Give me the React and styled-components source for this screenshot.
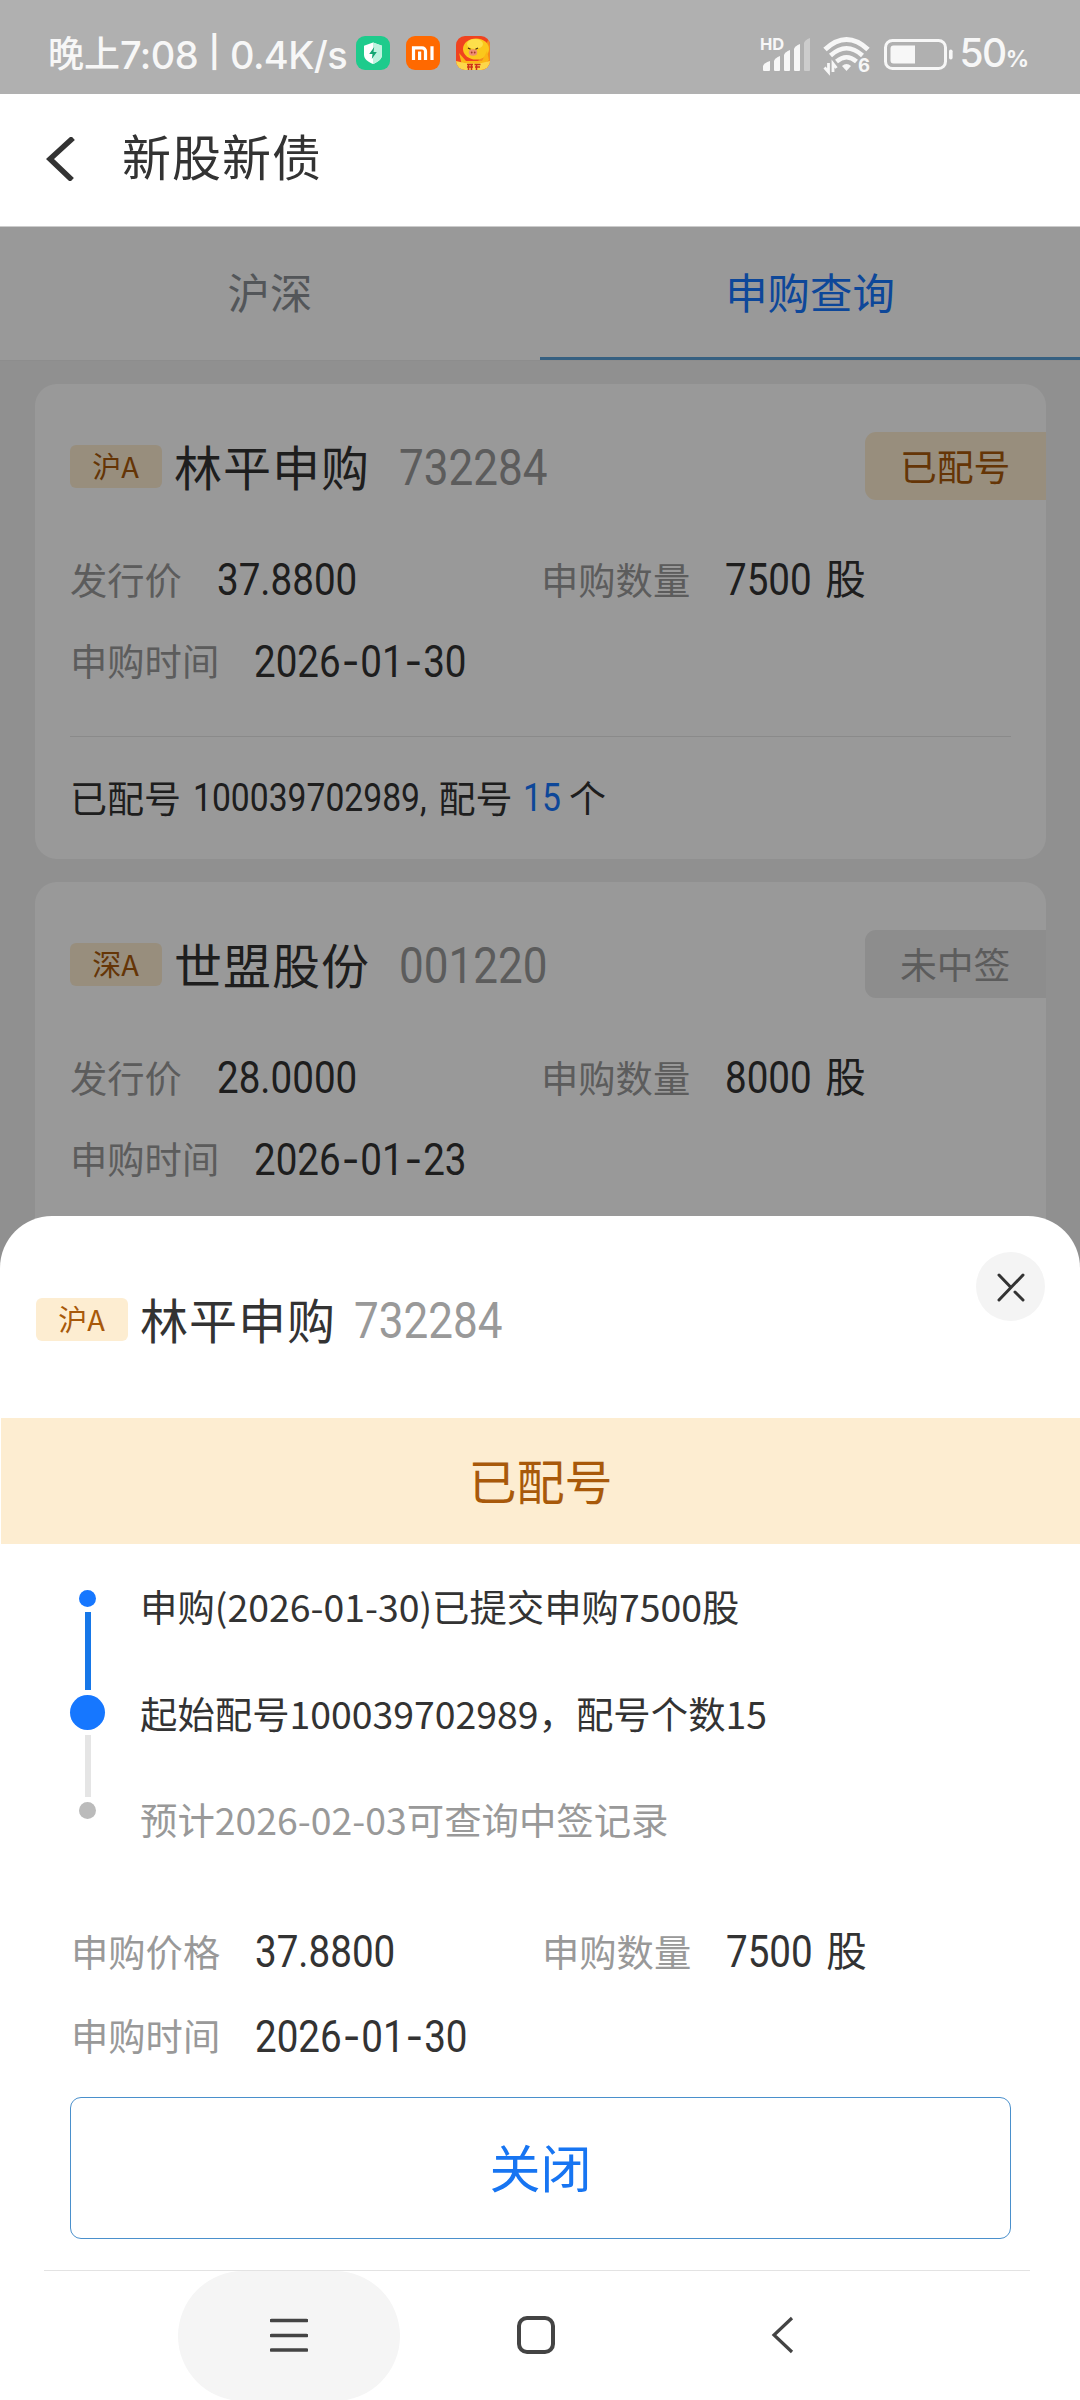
import React from 'react';
import styled, { createGlobalStyle } from 'styled-components';

const GlobalStyle = createGlobalStyle`
  * {
    box-sizing: border-box;
  }

  body {
    margin: 0;
    background: #fff;
    font-family: "Noto Sans CJK SC", "Noto Sans", sans-serif;
    color: #333;
  }
`;

const Screen = styled.div`
  display: flex;
  flex-direction: column;
  width: 1080px;
  height: 2400px;
  overflow: hidden;
  background: #fff;
`;

/* Status bar */

const StatusBar = styled.div`
  display: flex;
  align-items: center;
  height: 94px;
  padding: 15px 52px 0 48px;
  background: #b0b0b0;
  color: #f7f7f7;
  font-weight: 500;
  line-height: 40px;
  white-space: nowrap;

  svg {
    overflow: visible;
  }
`;

const Clock = styled.div`
  display: flex;
  align-items: center;
  width: 308px;
  height: 40px;
  font-family: Inter, "Noto Sans CJK SC", sans-serif;
  font-size: 38px;
  letter-spacing: -0.6px;
`;

const Hour = styled.span`
  margin-top: -1px;
  font-size: 36px;
  letter-spacing: 0;
`;

const Bar = styled.span`
  width: 32px;
  margin-top: -5px;
  font-size: 31px;
  font-weight: 600;
  text-align: center;
`;

const AppIcons = styled.div`
  display: flex;
  gap: 16px;
  height: 34px;
  margin-top: -3px;
`;

const StatusRight = styled.div`
  display: flex;
  align-items: center;
  margin-left: auto;
`;

const Percent = styled.div`
  margin: 2px 0 0 6px;
  font-family: Inter, sans-serif;
  font-size: 39px;
  letter-spacing: -1.6px;

  small {
    font-size: 23px;
    font-weight: 700;
    letter-spacing: -1px;
  }
`;

/* Header and tabs */

const Header = styled.header`
  display: flex;
  align-items: center;
  height: 133px;
  padding: 0 46px 3px;
  border-bottom: 1px solid #ccc;
`;

const PageTitle = styled.h1`
  margin: -8px 0 0 46px;
  font-size: 49px;
  font-weight: 400;
  line-height: 60px;
  letter-spacing: 1px;
`;

const Main = styled.main`
  position: relative;
  flex: 1;
  overflow: hidden;
  background: #f1f1f1;
`;

const Tabs = styled.div`
  display: flex;
  height: 134px;
  background: #fff;
  border-bottom: 1px solid #ececec;
`;

const Tab = styled.div`
  display: flex;
  flex: 1;
  align-items: center;
  justify-content: center;
  padding-bottom: ${({ $active }) => ($active ? '2px' : '5px')};
  border-bottom: ${({ $active }) => ($active ? '3px solid #5aa0d8' : 'none')};
  color: ${({ $active }) => ($active ? '#1677ff' : '#8b9095')};
  font-size: 42.4px;
  line-height: 50px;
`;

/* Cards */

const CardList = styled.div`
  display: flex;
  flex-direction: column;
  gap: 23px;
  padding: 23px 34px 0 35px;
`;

const Card = styled.section`
  height: 475px;
  padding: 48px 0 0 35px;
  border-radius: 22px;
  background: #fff;
`;

const TitleRow = styled.div`
  display: flex;
  align-items: center;
  height: 68px;
`;

const Tag = styled.span`
  width: 92px;
  height: 43px;
  margin: 0 12px 0 0;
  padding-right: 1px;
  border-radius: 6px;
  background: #fdedd1;
  color: #a8590a;
  font-size: 29px;
  line-height: 40px;
  text-align: center;
`;

const StockName = styled.span`
  font-size: 48px;
  line-height: 60px;
  letter-spacing: 1px;
  margin-top: -2px;
`;

/* Narrow figures: the box keeps its width, the glyphs are drawn tighter */
const Num = styled.span`
  display: inline-block;
  font-family: Roboto, sans-serif;
  font-size: ${({ $size }) => $size || 43.6}px;
  line-height: 1.2;
  margin-top: 4px;
  transform: scaleX(0.885);
  transform-origin: left center;
`;

const Dash = styled.span`
  padding: 0 1px;
  font-family: Inter, sans-serif;
`;

const Code = styled(Num)`
  margin: 5px 0 0 ${({ $gap }) => $gap}px;
  color: #999;
  transform: scaleX(0.872);
`;

const Badge = styled.span`
  width: 181px;
  height: 68px;
  margin-left: auto;
  padding-left: 35px;
  border-radius: 11px 0 0 11px;
  background: ${({ $muted }) => ($muted ? '#ebebeb' : '#fdedd1')};
  color: ${({ $muted }) => ($muted ? '#999' : '#a8590a')};
  font-size: 36.8px;
  line-height: 67px;
`;

const InfoGrid = styled.div`
  display: grid;
  grid-template-columns: 471px 1fr;
  grid-auto-rows: ${({ $row }) => $row}px;
  align-items: center;
  margin-top: ${({ $top }) => $top}px;
`;

const Field = styled.div`
  display: flex;
  align-items: center;
  line-height: 50px;
`;

const Label = styled.span`
  margin: -2px 35px 0 0;
  color: #999;
  font-size: 37.3px;
`;

const Unit = styled.span`
  margin: -5px 0 0 2px;
  font-size: 40.5px;
`;

const Footer = styled.div`
  display: flex;
  align-items: center;
  height: 120px;
  margin: 35px 35px 0 0;
  border-top: 1px solid #e6e6e6;
  font-size: 37px;
  line-height: 48px;
`;

const FooterNum = styled(Num)`
  margin: 4px ${({ $right }) => $right}px 0 ${({ $left }) => $left}px;
  color: ${({ $blue }) => ($blue ? '#1677ff' : 'inherit')};
  transform: scaleX(0.87);
`;

/* Bottom sheet over the dimmed page */

const Mask = styled.div`
  position: absolute;
  inset: 0;
  display: flex;
  flex-direction: column;
  justify-content: flex-end;
  background: rgba(0, 0, 0, 0.4);
`;

const Sheet = styled.div`
  display: flex;
  flex-direction: column;
  height: 1184px;
  border-radius: 52px 52px 0 0;
  background: #fff;
`;

const SheetHeader = styled.div`
  display: flex;
  align-items: flex-start;
  justify-content: space-between;
  height: 202px;
  padding: 36px 35px 0 36px;
`;

const SheetTitle = styled(TitleRow)`
  margin-top: 33px;
`;

const CloseIcon = styled.button`
  display: flex;
  align-items: center;
  justify-content: center;
  width: 69px;
  height: 69px;
  padding: 0;
  border: 0;
  border-radius: 50%;
  background: #f4f4f4;
`;

const Banner = styled.div`
  height: 126px;
  margin-left: 1px;
  background: #fdedd1;
  color: #a8590a;
  font-size: 48px;
  line-height: 122px;
  text-align: center;
`;

const Steps = styled.div`
  display: flex;
  padding: 46px 0 0 70px;
`;

const Track = styled.div`
  display: flex;
  flex-direction: column;
  align-items: center;
  width: 35px;
  margin-right: 35px;
`;

const Dot = styled.i`
  width: ${({ $size }) => $size}px;
  height: ${({ $size }) => $size}px;
  border-radius: 50%;
  background: ${({ $done }) => ($done ? '#1677ff' : '#bbb')};
`;

const Line = styled.i`
  width: 6px;
  height: ${({ $length }) => $length}px;
  margin: 5px 0;
  background: ${({ $done }) => ($done ? '#1677e8' : '#e5e5e5')};
`;

const StepList = styled.ul`
  margin: -19px 0 0;
  padding: 0;
  list-style: none;
`;

const Step = styled.li`
  height: 106.5px;
  color: ${({ $pending }) => ($pending ? '#999' : '#333')};
  font-size: 37.4px;
  line-height: 70px;
`;

const Details = styled.div`
  padding-left: 71px;
`;

const CloseButton = styled.button`
  height: 142px;
  margin: 19px 69px 0 70px;
  padding: 0 0 4px;
  border: 1.5px solid #4a90cc;
  border-radius: 11px;
  background: #fff;
  color: #1775f2;
  font-family: inherit;
  font-size: 51px;
  line-height: 60px;
`;

const NavBar = styled.nav`
  display: grid;
  grid-template-columns: 222px 272px 221px;
  align-items: center;
  justify-items: center;
  height: 130px;
  margin: auto 50px 0 44px;
  padding-left: 134px;
  border-top: 1px solid #e3e3e3;
`;

const NavItem = styled.div`
  display: flex;
  align-items: center;
  justify-content: center;
  width: 222px;
  height: 130px;
  border-radius: 65px;
  background: ${({ $pressed }) => ($pressed ? '#f5f5f5' : 'none')};
`;

const ShieldIcon = () => (
  <svg width="34" height="34" viewBox="0 0 34 34">
    <rect width="34" height="34" rx="9" fill="#1ecb8c" />
    <path d="M17 6.500l9 3.200v8.800c0 4.600-4 7.500-9 9.500-5-2-9-4.900-9-9.500V9.700z" fill="#fff" />
    <path d="M17 6.500l9 3.200v8.800c0 4.600-4 7.500-9 9.500z" fill="#bdf3df" />
    <path d="M18.200 11l-5 7h3.300l-.7 5 5-7h-3.300z" fill="#14a673" />
  </svg>
);

const MiIcon = () => (
  <svg width="34" height="34" viewBox="0 0 34 34">
    <rect width="34" height="34" rx="9" fill="#ff6900" />
    <path d="M7.500 24V11.800h8.500a3.500 3.500 0 0 1 3.500 3.500V24M13.600 15.500V24M26 10.300V24" fill="none" stroke="#fff" strokeWidth="3.200" />
  </svg>
);

const PigIcon = () => (
  <svg width="34" height="34" viewBox="0 0 34 34">
    <defs>
      <clipPath id="pig">
        <rect width="34" height="34" rx="9" />
      </clipPath>
    </defs>
    <g clipPath="url(#pig)">
      <rect width="34" height="34" fill="#f0431f" />
      <path d="M34 0v34H18z" fill="#f58a1d" />
      <ellipse cx="20" cy="13" rx="13" ry="10.500" fill="#fbc81c" />
      <ellipse cx="19" cy="8" rx="8" ry="5" fill="#fde04b" />
      <path d="M3 17l7 8h16l5-10 2 9-6 5H6z" fill="#fbb615" />
      <ellipse cx="17" cy="16.500" rx="4.200" ry="3.200" fill="#ef8d72" />
      <circle cx="15.700" cy="16.500" r="0.900" fill="#a33a26" />
      <circle cx="18.700" cy="16.500" r="0.900" fill="#a33a26" />
      <path d="M12 12l2.500 1.300M22 12l-2.500 1.300" stroke="#4a2a10" strokeWidth="1.200" />
      <path d="M0 25q17 5 34 0v9H0z" fill="#fcd64a" />
      <path d="M11 28.500h6M11 31h6M12.500 28v6M15.500 28v6M18.500 28.500h6M19 31h5M20.500 28v6" stroke="#cf3019" strokeWidth="1.500" />
    </g>
  </svg>
);

const SignalIcon = () => (
  <svg width="50" height="36" viewBox="0 0 50 36" fill="#f7f7f7">
    <text x="-1" y="13" fontFamily="Inter, sans-serif" fontSize="16.500" fontWeight="700">HD</text>
    <path d="M2 33v-4q1-3 7-5v9q0 1-1 1H3q-1 0-1-1z" />
    <path d="M13 33v-9q1-3 6-5v14q0 1-1 1h-4q-1 0-1-1z" />
    <path d="M23 33V18q1-3 6-5v20q0 1-1 1h-4q-1 0-1-1z" />
    <path d="M33 33V12q1-3 6-5v26q0 1-1 1h-4q-1 0-1-1z" />
    <path d="M43 33V6q1-3 6-5v32q0 1-1 1h-4q-1 0-1-1z" opacity="0.400" />
  </svg>
);

const WifiIcon = () => (
  <svg width="48" height="38" viewBox="0 0 48 38" fill="none" stroke="#f7f7f7">
    <path d="M2 13.500Q23.500-6.500 45 13.500" strokeWidth="5" />
    <path d="M7.500 19.500Q23.500 5 39.500 19.500" strokeWidth="4.500" />
    <path d="M13.500 25.500Q23.500 17 33.500 25.500" strokeWidth="4.500" />
    <path d="M19 30q4.500-4 9 0l-4.500 5z" fill="#f7f7f7" stroke="none" />
    <path d="M5.500 27v9l-4-4.500M10 36v-8.500l3.500 4.500" strokeWidth="2.800" />
    <text x="35" y="36" fill="#f7f7f7" stroke="none" fontFamily="Inter, sans-serif" fontSize="18.500" fontWeight="700">6</text>
  </svg>
);

const BatteryIcon = () => (
  <svg width="70" height="32" viewBox="0 0 70 32">
    <rect x="1.500" y="1.500" width="60" height="28" rx="7" fill="none" stroke="#f7f7f7" strokeWidth="3" />
    <path d="M31 6.500v18H9.500a3 3 0 0 1-3-3v-12a3 3 0 0 1 3-3z" fill="#f7f7f7" />
    <rect x="65" y="10.500" width="3.600" height="10" rx="1.800" fill="#f7f7f7" />
  </svg>
);

const StatusGap = styled.i`
  width: ${({ $w }) => $w}px;
`;

const StockTitle = ({ market, name, code, gap }) => (
  <>
    <Tag>{market}</Tag>
    <StockName>{name}</StockName>
    <Code $size={50.5} $gap={gap}>{code}</Code>
  </>
);

const DateNum = ({ value }) => (
  <Num>
    {value.split('-').map((part, i) => (
      <React.Fragment key={i}>
        {i > 0 && <Dash>-</Dash>}
        {part}
      </React.Fragment>
    ))}
  </Num>
);

const Info = ({ priceLabel, price, amount, date, row, top }) => (
  <InfoGrid $row={row} $top={top}>
    <Field>
      <Label>{priceLabel}</Label>
      <Num>{price}</Num>
    </Field>
    <Field>
      <Label>申购数量</Label>
      <Num>{amount}</Num>
      <Unit>股</Unit>
    </Field>
    <Field>
      <Label>申购时间</Label>
      <DateNum value={date} />
    </Field>
  </InfoGrid>
);

const App = () => (
  <Screen>
    <GlobalStyle />
    <StatusBar>
      <Clock>
        <Hour>晚上</Hour>
        <span>7:08</span>
        <Bar>|</Bar>
        <span>0.4K/s</span>
      </Clock>
      <AppIcons>
        <ShieldIcon />
        <MiIcon />
        <PigIcon />
      </AppIcons>
      <StatusRight>
        <SignalIcon />
        <StatusGap $w={12} />
        <WifiIcon />
        <StatusGap $w={13} />
        <BatteryIcon />
        <Percent>
          50
          <small>%</small>
        </Percent>
      </StatusRight>
    </StatusBar>

    <Header>
      <svg width="30" height="44" viewBox="0 0 30 44">
        <path d="M27 1L4 22l22 21" fill="none" stroke="#333" strokeWidth="5.500" />
      </svg>
      <PageTitle>新股新债</PageTitle>
    </Header>

    <Main>
      <Tabs>
        <Tab>沪深</Tab>
        <Tab $active>申购查询</Tab>
      </Tabs>
      <CardList>
        <Card>
          <TitleRow>
            <StockTitle market="沪A" name="林平申购" code="732284" gap={29} />
            <Badge>已配号</Badge>
          </TitleRow>
          <Info priceLabel="发行价" price="37.8800" amount="7500" date="2026-01-30" row={81} top={39} />
          <Footer>
            已配号
            <FooterNum $size={38.7} $left={12} $right={-23}>100039702989,</FooterNum>
            配号
            <FooterNum $size={38.7} $left={10} $right={3} $blue>15</FooterNum>
            个
          </Footer>
        </Card>
        <Card>
          <TitleRow>
            <StockTitle market="深A" name="世盟股份" code="001220" gap={29} />
            <Badge $muted>未中签</Badge>
          </TitleRow>
          <Info priceLabel="发行价" price="28.0000" amount="8000" date="2026-01-23" row={81} top={39} />
        </Card>
      </CardList>

      <Mask>
        <Sheet>
          <SheetHeader>
            <SheetTitle>
              <StockTitle market="沪A" name="林平申购" code="732284" gap={18} />
            </SheetTitle>
            <CloseIcon>
              <svg width="30" height="30" viewBox="0 0 30 30">
                <path d="M3 28L27 3M3 3l12 12.500M19 20l8 8" fill="none" stroke="#333" strokeWidth="3" strokeLinecap="round" />
              </svg>
            </CloseIcon>
          </SheetHeader>
          <Banner>已配号</Banner>
          <Steps>
            <Track>
              <Dot $size={17} $done />
              <Line $length={78} $done />
              <Dot $size={35} $done />
              <Line $length={62} />
              <Dot $size={17} />
            </Track>
            <StepList>
              <Step>申购(2026-01-30)已提交申购7500股</Step>
              <Step>起始配号100039702989，配号个数15</Step>
              <Step $pending>预计2026-02-03可查询中签记录</Step>
            </StepList>
          </Steps>
          <Details>
            <Info priceLabel="申购价格" price="37.8800" amount="7500" date="2026-01-30" row={84} top={19} />
          </Details>
          <CloseButton>关闭</CloseButton>
          <NavBar>
            <NavItem $pressed>
              <svg width="38" height="38" viewBox="0 0 38 38">
                <path d="M1.500 3.500h35M1.500 18.500h35M1.500 33h35" stroke="#444" strokeWidth="3.600" strokeLinecap="round" />
              </svg>
            </NavItem>
            <svg width="40" height="42" viewBox="0 0 40 42">
              <rect x="3" y="3" width="34" height="34" rx="8" fill="none" stroke="#444" strokeWidth="4" />
            </svg>
            <svg width="24" height="40" viewBox="0 0 24 40">
              <path d="M21 2L3 19l18 17" fill="none" stroke="#444" strokeWidth="3.200" />
            </svg>
          </NavBar>
        </Sheet>
      </Mask>
    </Main>
  </Screen>
);

export default App;
